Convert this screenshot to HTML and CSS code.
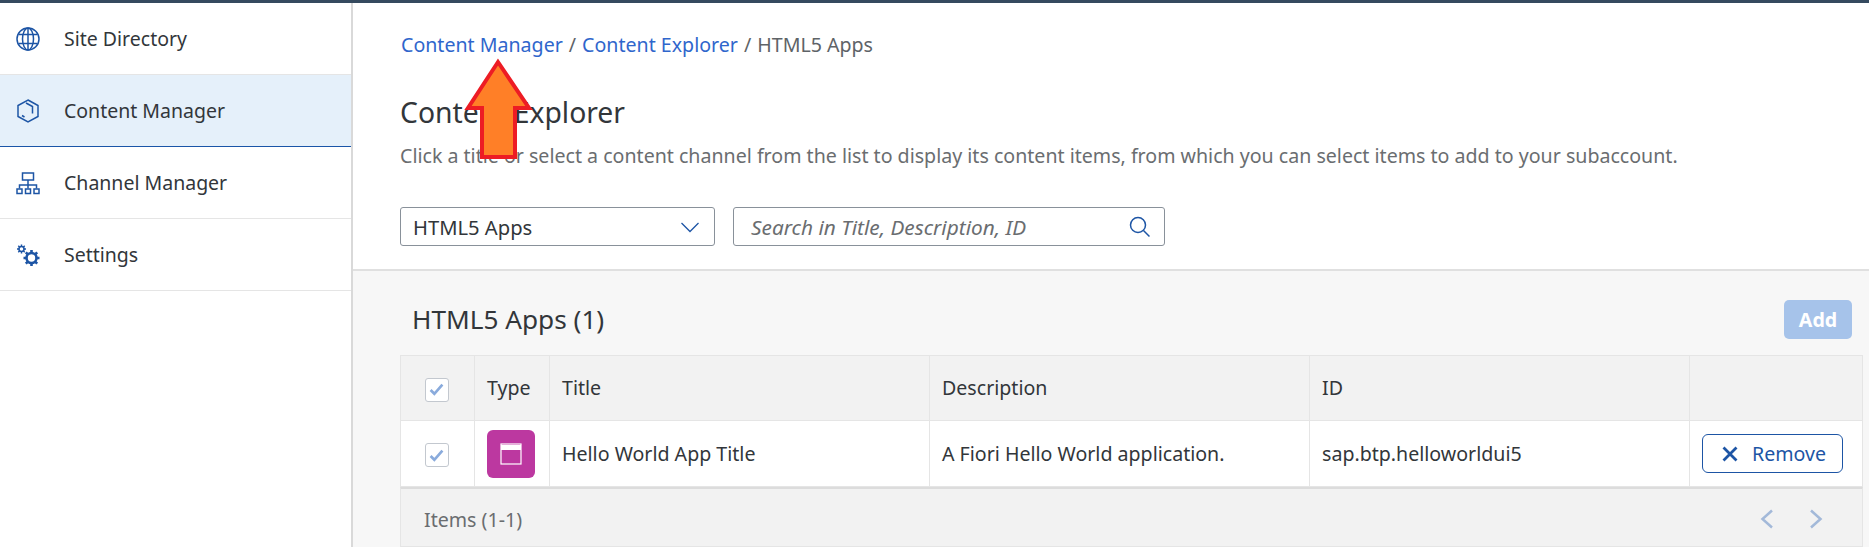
FILE: index.html
```html
<!DOCTYPE html>
<html lang="en">
<head>
    <meta charset="UTF-8">
    <title>Content Explorer</title>
    <link rel="stylesheet" href="styles.css">
</head>
<body>
    <div class="layout">
        <nav class="sidebar">
            <a class="nav-item">
                <svg class="nav-icon" viewBox="0 0 24 24"><circle cx="12" cy="12" r="11"/><ellipse cx="12" cy="12" rx="5.500" ry="11"/><path d="M2.500 7.500h19M2.500 16.500h19M12 1v22"/></svg>
                Site Directory
            </a>
            <a class="nav-item active">
                <svg class="nav-icon" viewBox="0 0 24 24"><path d="M12 1l10 5.500v11L12 23 2 17.500v-11z"/><path d="M10 4l6.500 3.500v7M6 16.500l2.500 1.500"/></svg>
                Content Manager
            </a>
            <a class="nav-item">
                <svg class="nav-icon" viewBox="0 0 24 24"><rect x="6.500" y="2" width="11" height="7"/><path d="M12 9v5M3.500 17.500v-3.500h17v3.500M12 14v3.500"/><rect x="1" y="18" width="5" height="4.500"/><rect x="9.500" y="18" width="5" height="4.500"/><rect x="18" y="18" width="5" height="4.500"/></svg>
                Channel Manager
            </a>
            <a class="nav-item">
                <svg class="nav-icon" viewBox="0 0 24 24"><circle cx="5.500" cy="6" r="2.500"/><path d="M5.500 1.500v2M5.500 8.500v2M1 6h2M8 6h2M2.300 2.800l1.400 1.400M7.300 7.800l1.400 1.400M2.300 9.200l1.400-1.400M7.300 4.200l1.400-1.400"/><circle class="gear" cx="15.500" cy="15" r="5"/><path class="gear" d="M15.500 7v3M15.500 20v3M7.500 15h3M20.500 15h3M9.800 9.300l2.100 2.100M19.100 18.600l2.100 2.100M9.800 20.700l2.100-2.100M19.100 11.400l2.100-2.100"/></svg>
                Settings
            </a>
        </nav>

        <main class="content">
            <header class="page-head">
                <div class="breadcrumb">
                    <a>Content Manager</a><span class="sep">/</span><a>Content Explorer</a><span class="sep">/</span><span>HTML5 Apps</span>
                </div>
                <h1>Content Explorer</h1>
                <p class="hint">Click a title or select a content channel from the list to display its content items, from which you can select items to add to your subaccount.</p>
                <div class="filters">
                    <div class="field select-field">
                        <span>HTML5 Apps</span>
                        <svg class="chevron" viewBox="0 0 20 12"><path d="M1.500 2l8.500 8.500L18.500 2"/></svg>
                    </div>
                    <div class="field search-field">
                        <span>Search in Title, Description, ID</span>
                        <svg class="search-icon" viewBox="0 0 22 22"><circle cx="9" cy="9" r="7.500"/><path d="M14.500 14.500l6 6"/></svg>
                    </div>
                </div>
            </header>

            <section class="list">
                <div class="list-head">
                    <h2>HTML5 Apps (1)</h2>
                    <button class="add-btn">Add</button>
                </div>
                <table>
                    <thead>
                        <tr>
                            <th class="col-check"><span class="check"><svg viewBox="0 0 14 12"><path d="M1.500 6.500l3.500 3.500L12.500 1.500"/></svg></span></th>
                            <th class="col-type type-head">Type</th>
                            <th class="col-wide">Title</th>
                            <th class="col-wide">Description</th>
                            <th class="col-wide">ID</th>
                            <th></th>
                        </tr>
                    </thead>
                    <tbody>
                        <tr>
                            <td class="col-check"><span class="check"><svg viewBox="0 0 14 12"><path d="M1.500 6.500l3.500 3.500L12.500 1.500"/></svg></span></td>
                            <td class="col-type"><span class="type-badge"><svg viewBox="0 0 22 22"><rect x="1" y="1" width="20" height="20"/><path class="bar" d="M1 4.500h20"/></svg></span></td>
                            <td>Hello World App Title</td>
                            <td>A Fiori Hello World application.</td>
                            <td>sap.btp.helloworldui5</td>
                            <td class="col-action">
                                <button class="remove-btn"><svg viewBox="0 0 16 16"><path d="M1.500 1.500l13 13M14.500 1.500l-13 13"/></svg>Remove</button>
                            </td>
                        </tr>
                    </tbody>
                </table>
                <div class="list-foot">
                    <span>Items (1-1)</span>
                    <div class="pager">
                        <svg viewBox="0 0 14 20"><path d="M12 1.500L2.500 10l9.500 8.500"/></svg>
                        <svg viewBox="0 0 14 20"><path d="M2 1.500L11.500 10 2 18.500"/></svg>
                    </div>
                </div>
            </section>
        </main>
    </div>

    <svg class="arrow" viewBox="0 0 75 106"><path d="M38 7L69 53H55V102H22V53H8z"/></svg>
</body>
</html>
```

FILE: styles.css
```css
* {
    box-sizing: border-box;
}

body {
    margin: 0;
    height: 547px;
    overflow: hidden;
    position: relative;
    background-color: #fff;
    border-top: 3px solid #354a5f;
    font-family: "Noto Sans", "Open Sans", Arial, sans-serif;
    font-size: 19.600px;
    color: #32363a;
}

.layout {
    display: flex;
    height: 544px;
}

.sidebar {
    width: 353px;
    flex-shrink: 0;
    border-right: 2px solid #d9d9d9;
    font-size: 19.500px;
}

.nav-item {
    display: flex;
    align-items: center;
    height: 72px;
    padding-left: 16px;
    border-bottom: 1px solid #e5e5e5;
}

.nav-item.active {
    background-color: #e5f0fa;
    border-bottom-color: #1a55a8;
}

.nav-icon {
    width: 24px;
    height: 24px;
    margin-right: 24px;
    fill: none;
    stroke: #1d55a5;
    stroke-width: 1.500;
}

.nav-icon .gear {
    stroke-width: 2.600;
}

.content {
    flex: 1;
    min-width: 0;
}

.page-head {
    height: 268px;
    padding: 29px 0 0 47px;
    border-bottom: 2px solid #e0e0e0;
}

.breadcrumb {
    height: 26px;
    line-height: 26px;
    margin-left: 1px;
    color: #5e6367;
}

.breadcrumb a {
    color: #2f66cc;
}

.sep {
    margin: 0 6px;
}

h1 {
    margin: 35px 0 0;
    font-size: 28.300px;
    font-weight: 400;
    line-height: 38px;
}

.hint {
    margin: 12px 0 0;
    line-height: 26px;
    color: #6a6d70;
}

.filters {
    display: flex;
    gap: 18px;
    margin-top: 38px;
}

.field {
    display: flex;
    align-items: center;
    justify-content: space-between;
    height: 39px;
    padding: 0 12px;
    border: 1px solid #89919a;
    border-radius: 3px;
}

.select-field {
    width: 315px;
    font-size: 20.200px;
}

.search-field {
    width: 432px;
    padding-left: 17px;
    font-size: 20.800px;
    font-style: italic;
    color: #6a6d70;
}

.chevron {
    width: 20px;
    height: 12px;
    margin-right: 2px;
    fill: none;
    stroke: #1d55a5;
    stroke-width: 1.300;
}

.search-icon {
    width: 22px;
    height: 22px;
    margin-right: 1px;
    fill: none;
    stroke: #1d55a5;
    stroke-width: 1.500;
}

.list {
    height: 276px;
    padding: 0 6px 0 47px;
    background-color: #f7f7f7;
}

.list-head {
    display: flex;
    align-items: center;
    justify-content: space-between;
    height: 84px;
    padding: 12px 11px 0 12px;
}

h2 {
    margin: 0;
    font-size: 26.200px;
    font-weight: 400;
}

.add-btn {
    width: 68px;
    height: 39px;
    border: 0;
    border-radius: 5px;
    background-color: #a6c3ea;
    color: #fff;
    font: inherit;
    font-weight: 700;
}

table {
    width: 100%;
    table-layout: fixed;
    border-collapse: collapse;
    background-color: #fff;
}

th, td {
    height: 65px;
    padding: 0 12px;
    border: 1px solid #e5e5e5;
    text-align: left;
    font-weight: 400;
}

th {
    background-color: #f2f2f2;
    padding-bottom: 2px;
}

td {
    height: 66px;
}

.col-check {
    width: 74px;
    padding: 0 2px 0 0;
    text-align: center;
}

.col-type {
    width: 75px;
    padding: 0 2px 0 0;
    text-align: center;
}

.type-head {
    padding: 0 0 2px 12px;
    text-align: left;
}

.col-wide {
    width: 380px;
}

.check {
    display: inline-flex;
    align-items: center;
    justify-content: center;
    width: 24px;
    height: 24px;
    vertical-align: middle;
    border: 1px solid #c3c8cf;
    border-radius: 3px;
    background-color: #fff;
}

.check svg {
    width: 15px;
    height: 13px;
    fill: none;
    stroke: #8aabdc;
    stroke-width: 2.500;
}

.type-badge {
    display: inline-flex;
    align-items: center;
    justify-content: center;
    width: 48px;
    height: 48px;
    vertical-align: middle;
    border-radius: 6px;
    background-color: #bc38a0;
}

.type-badge svg {
    width: 22px;
    height: 22px;
    fill: none;
    stroke: #fff;
    stroke-width: 1.200;
}

.type-badge .bar {
    stroke-width: 5;
}

.col-action {
    padding: 0 0 0 12px;
}

.remove-btn {
    display: flex;
    align-items: center;
    width: 141px;
    height: 39px;
    padding: 0 0 0 19px;
    border: 1px solid #1d55a5;
    border-radius: 6px;
    background-color: #fff;
    color: #1d55a5;
    font: inherit;
}

.remove-btn svg {
    width: 16px;
    height: 16px;
    margin-right: 14px;
    fill: none;
    stroke: #1d55a5;
    stroke-width: 2.800;
}

.list-foot {
    display: flex;
    align-items: center;
    justify-content: space-between;
    height: 60px;
    padding: 3px 39px 0 23px;
    border: 1px solid #e5e5e5;
    border-top: 2px solid #dcdcdc;
    background-color: #f2f2f2;
    color: #6a6d70;
}

.pager {
    display: flex;
    gap: 35px;
}

.pager svg {
    width: 14px;
    height: 20px;
    fill: none;
    stroke: #a3b9d9;
    stroke-width: 2.500;
}

.arrow {
    position: absolute;
    left: 460px;
    top: 52px;
    width: 75px;
    height: 106px;
    fill: #ff7f27;
    stroke: #ed1c24;
    stroke-width: 4;
}
```
